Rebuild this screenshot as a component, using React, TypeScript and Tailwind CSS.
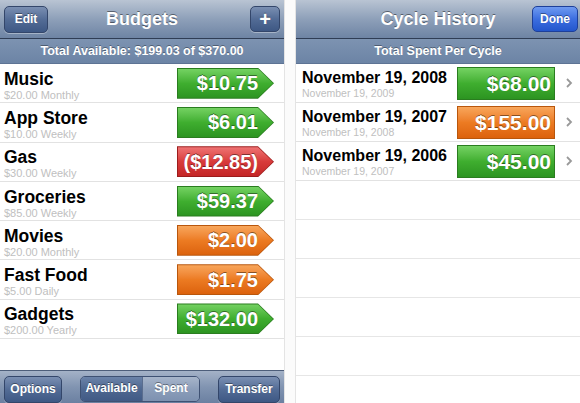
import React from "react";

const font = { fontFamily: '"Liberation Sans", Arial, sans-serif' };

type Tone = "green" | "orange" | "red";

const toneOuter: Record<Tone, string> = {
  green: "bg-[#2a7d1f]",
  orange: "bg-[#b9560c]",
  red: "bg-[#9c1c1c]",
};
const toneInner: Record<Tone, string> = {
  green: "bg-gradient-to-b from-[#74d262] via-[#3fae2f] to-[#2c9421]",
  orange: "bg-gradient-to-b from-[#f8a65a] via-[#ec7b22] to-[#dc620c]",
  red: "bg-gradient-to-b from-[#ef7373] via-[#d83b3b] to-[#c42626]",
};

function ArrowTag({ tone, value }: { tone: Tone; value: string }) {
  return (
    <div
      className={`h-[31px] w-[97px] shrink-0 p-px ${toneOuter[tone]} [clip-path:polygon(0_0,81px_0,97px_50%,81px_100%,0_100%)]`}
    >
      <div
        className={`flex h-full w-full items-center justify-end pr-[15px] ${toneInner[tone]} [clip-path:polygon(0_0,80px_0,95px_50%,80px_100%,0_100%)]`}
      >
        <span className="text-[20px] font-bold leading-none text-white [text-shadow:0_-1px_0_rgba(0,0,0,0.45)]">
          {value}
        </span>
      </div>
    </div>
  );
}

function RectTag({ tone, value }: { tone: Tone; value: string }) {
  return (
    <div className={`h-[33px] w-[98px] shrink-0 p-px ${toneOuter[tone]}`}>
      <div className={`flex h-full w-full items-center justify-end pr-[3px] ${toneInner[tone]}`}>
        <span className="text-[21px] font-bold leading-none text-white [text-shadow:0_-1px_0_rgba(0,0,0,0.45)]">
          {value}
        </span>
      </div>
    </div>
  );
}

const budgets: { name: string; sub: string; value: string; tone: Tone }[] = [
  { name: "Music", sub: "$20.00 Monthly", value: "$10.75", tone: "green" },
  { name: "App Store", sub: "$10.00 Weekly", value: "$6.01", tone: "green" },
  { name: "Gas", sub: "$30.00 Weekly", value: "($12.85)", tone: "red" },
  { name: "Groceries", sub: "$85.00 Weekly", value: "$59.37", tone: "green" },
  { name: "Movies", sub: "$20.00 Monthly", value: "$2.00", tone: "orange" },
  { name: "Fast Food", sub: "$5.00 Daily", value: "$1.75", tone: "orange" },
  { name: "Gadgets", sub: "$200.00 Yearly", value: "$132.00", tone: "green" },
];

const cycles: { date: string; sub: string; value: string; tone: Tone }[] = [
  { date: "November 19, 2008", sub: "November 19, 2009", value: "$68.00", tone: "green" },
  { date: "November 19, 2007", sub: "November 19, 2008", value: "$155.00", tone: "orange" },
  { date: "November 19, 2006", sub: "November 19, 2007", value: "$45.00", tone: "green" },
];

const navBar =
  "grid h-[39px] shrink-0 items-center border-b border-[#2f3d55] bg-gradient-to-b from-[#b9c4d3] via-[#8ea0b9] to-[#6e84a4]";
const subBar =
  "flex h-[25px] shrink-0 items-center justify-center border-b border-[#5d7394] bg-gradient-to-b from-[#7d93b1] to-[#6c84a5] text-[12.5px] font-bold text-white [text-shadow:0_-1px_0_rgba(0,0,0,0.35)]";
const darkBtn =
  "flex items-center justify-center rounded-[5px] border border-[#33466a] bg-gradient-to-b from-[#7a8fb2] via-[#536c96] to-[#3e5884] text-[12px] font-bold text-white shadow-[0_1px_0_rgba(255,255,255,0.35)] [text-shadow:0_-1px_0_rgba(0,0,0,0.4)]";
const title =
  "text-center text-[18px] font-bold text-white [text-shadow:0_-1px_0_rgba(0,0,0,0.45)]";

function LeftScreen() {
  return (
    <div className="flex h-[403px] w-[284px] shrink-0 flex-col bg-white">
      <div className={`${navBar} grid-cols-[44px_1fr_44px] px-[4px]`}>
        <div className={`${darkBtn} h-[27px] w-[44px]`}>Edit</div>
        <div className={title}>Budgets</div>
        <div className={`${darkBtn} h-[26px] w-[30px] justify-self-end text-[20px]`}>+</div>
      </div>
      <div className={subBar}>Total Available: $199.03 of $370.00</div>
      <div className="flex flex-1 flex-col">
        {budgets.map((b) => (
          <div
            key={b.name}
            className="flex h-[39.3px] shrink-0 items-center justify-between border-b border-[#e2e2e2] pl-[4px] pr-[10px]"
          >
            <div className="flex flex-col pt-[3px]">
              <span className="text-[17.5px] font-bold leading-[20px] text-black">{b.name}</span>
              <span className="text-[11px] leading-[12px] text-[#c0c0c0]">{b.sub}</span>
            </div>
            <ArrowTag tone={b.tone} value={b.value} />
          </div>
        ))}
      </div>
      <div className="flex h-[33px] shrink-0 items-center justify-between border-t border-[#4d5e7a] bg-gradient-to-b from-[#a4b2c7] via-[#8194b1] to-[#6b80a1] px-[4px] pt-[4px]">
        <div className={`${darkBtn} h-[27px] w-[58px]`}>Options</div>
        <div className="flex h-[26px] w-[120px] overflow-hidden rounded-[5px] border border-[#3e5173] text-[12px] font-bold text-white [text-shadow:0_-1px_0_rgba(0,0,0,0.4)]">
          <div className="flex w-[61px] items-center justify-center bg-gradient-to-b from-[#6b83a9] via-[#4f6891] to-[#415a85] pb-[3px]">
            Available
          </div>
          <div className="flex flex-1 items-center justify-center border-l border-[#5a6d8e] bg-gradient-to-b from-[#a7b5ca] via-[#8c9eba] to-[#7d91b0] pb-[3px]">
            Spent
          </div>
        </div>
        <div className={`${darkBtn} h-[27px] w-[62px]`}>Transfer</div>
      </div>
    </div>
  );
}

function RightScreen() {
  return (
    <div className="flex h-[403px] w-[284px] shrink-0 flex-col overflow-hidden bg-white">
      <div className={`${navBar} grid-cols-[46px_1fr_46px] px-[2px]`}>
        <div />
        <div className={title}>Cycle History</div>
        <div className="flex h-[26px] w-[46px] items-center justify-center rounded-[5px] border border-[#1d3f99] bg-gradient-to-b from-[#6f9af0] via-[#3c6ee0] to-[#2356cc] text-[12px] font-bold text-white [text-shadow:0_-1px_0_rgba(0,0,0,0.4)]">
          Done
        </div>
      </div>
      <div className={subBar}>Total Spent Per Cycle</div>
      <div className="flex flex-col">
        {cycles.map((c) => (
          <div
            key={c.date}
            className="flex h-[39px] shrink-0 items-center border-b border-[#e2e2e2] pl-[6px] pr-[6px]"
          >
            <div className="flex flex-1 flex-col pt-[2px]">
              <span className="text-[16px] font-bold leading-[18px] text-black">{c.date}</span>
              <span className="text-[10.5px] leading-[12px] text-[#c0c0c0]">{c.sub}</span>
            </div>
            <RectTag tone={c.tone} value={c.value} />
            <svg width="10" height="12" viewBox="0 0 10 12" className="ml-[9px] shrink-0">
              <path d="M3 2 L7 6 L3 10" fill="none" stroke="#999999" strokeWidth="1.8" />
            </svg>
          </div>
        ))}
        {Array.from({ length: 6 }).map((_, i) => (
          <div key={i} className="h-[39px] shrink-0 border-b border-[#e6e6e6]" />
        ))}
      </div>
    </div>
  );
}

export default function App() {
  return (
    <div className="flex h-[403px] w-[580px] overflow-hidden bg-white" style={font}>
      <LeftScreen />
      <div className="h-[403px] w-[12px] shrink-0 border-l border-r border-[#e4e4e4] bg-[#fbfbfb]" />
      <RightScreen />
    </div>
  );
}
